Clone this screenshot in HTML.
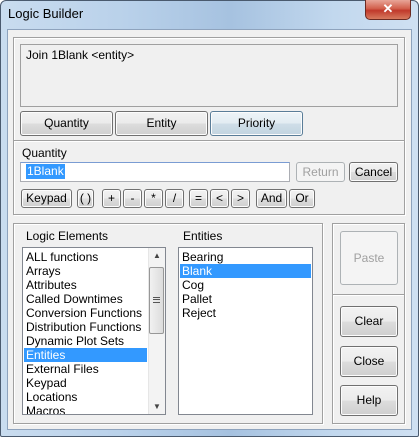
<!DOCTYPE html>
<html><head><style>
*{box-sizing:border-box;margin:0;padding:0}
body{width:419px;height:437px;overflow:hidden;background:#fff;font-family:"Liberation Sans",sans-serif;font-size:12px;color:#000;position:relative}
.a{position:absolute}
.frame{left:0;top:0;width:419px;height:437px;border:1px solid #4a5a6e;border-radius:6px 6px 2px 2px;background:linear-gradient(90deg,#c9dcef 0%,#b9d1ea 30%,#a6c2e0 55%,#c2d8ee 80%,#cfe0f2 100%)}
.client{left:7px;top:29px;width:405px;height:401px;background:#f0f0f0;border:1px solid #8ea3bd}
.grp{border:1px solid #a0a0a0;box-shadow:inset 1px 1px 0 #fff,1px 1px 0 #fff}
.btn{border:1px solid #707070;border-radius:3px;background:linear-gradient(#f2f2f2 0%,#ebebeb 50%,#dddddd 51%,#cfcfcf 100%);text-align:center;box-shadow:inset 0 0 0 1px #fcfcfc}
.dis{border:1px solid #adb2b5;background:#f4f4f4;color:#a0a0a0;border-radius:3px;text-align:center}
.list{background:#fff;border:1px solid #828790}
.it{position:absolute;left:2px;height:14px;line-height:14px;white-space:nowrap}
.sel{background:#3399ff;color:#fff}
</style></head><body>
<div class="a frame"></div>
<div class="a" style="left:8px;top:6px;font-size:13px">Logic Builder</div>
<div class="a" style="left:365px;top:0;width:46px;height:20px;border:1px solid #6b2a22;border-top:none;border-radius:0 0 5px 5px;background:linear-gradient(#e8a598 0%,#d2604c 45%,#c0392b 55%,#d77a5e 100%);color:#fff;font-weight:bold;text-align:center;line-height:18px;font-size:13px">✕</div>
<div class="a client"></div>
<div class="a grp" style="left:13px;top:37px;width:392px;height:178px"></div>
<div class="a" style="left:20px;top:44px;width:378px;height:63px;border:1px solid #a0a0a0;background:#f0f0f0"></div>
<div class="a" style="left:26px;top:48px">Join 1Blank &lt;entity&gt;</div>
<div class="a btn" style="left:20px;top:111px;width:93px;height:25px;line-height:23px">Quantity</div>
<div class="a btn" style="left:115px;top:111px;width:93px;height:25px;line-height:23px">Entity</div>
<div class="a btn" style="left:210px;top:111px;width:93px;height:25px;line-height:23px;border-color:#5a7d98;background:linear-gradient(#eef4f8 0%,#e2ecf2 50%,#cfdee8 51%,#c2d4e0 100%)">Priority</div>
<div class="a" style="left:14px;top:140px;width:390px;height:2px;border-top:1px solid #a0a0a0;border-bottom:1px solid #fff"></div>
<div class="a" style="left:22px;top:146px">Quantity</div>
<div class="a" style="left:20px;top:162px;width:270px;height:20px;background:#fff;border:1px solid #abadb3;border-top-color:#7a9cd3"></div>
<div class="a" style="left:26px;top:164px;background:#3399ff;color:#fff;height:15px;line-height:15px;padding:0 1px">1Blank</div>
<div class="a dis" style="left:296px;top:162px;width:49px;height:20px;line-height:18px">Return</div>
<div class="a btn" style="left:349px;top:162px;width:49px;height:20px;line-height:18px">Cancel</div>
<div class="a btn" style="left:21px;top:189px;width:51px;height:19px;line-height:17px">Keypad</div>
<div class="a btn" style="left:77px;top:189px;width:17px;height:19px;line-height:17px">( )</div>
<div class="a btn" style="left:102px;top:189px;width:19px;height:19px;line-height:17px">+</div>
<div class="a btn" style="left:123px;top:189px;width:19px;height:19px;line-height:17px">-</div>
<div class="a btn" style="left:144px;top:189px;width:19px;height:19px;line-height:17px">*</div>
<div class="a btn" style="left:165px;top:189px;width:19px;height:19px;line-height:17px">/</div>
<div class="a btn" style="left:189px;top:189px;width:19px;height:19px;line-height:17px">=</div>
<div class="a btn" style="left:210px;top:189px;width:19px;height:19px;line-height:17px">&lt;</div>
<div class="a btn" style="left:231px;top:189px;width:19px;height:19px;line-height:17px">&gt;</div>
<div class="a btn" style="left:256px;top:189px;width:31px;height:19px;line-height:17px">And</div>
<div class="a btn" style="left:289px;top:189px;width:26px;height:19px;line-height:17px">Or</div>

<div class="a grp" style="left:13px;top:223px;width:310px;height:201px"></div>
<div class="a grp" style="left:332px;top:223px;width:73px;height:201px"></div>
<div class="a" style="left:26px;top:229px">Logic Elements</div>
<div class="a" style="left:183px;top:229px">Entities</div>
<div class="a list" style="left:22px;top:247px;width:144px;height:168px;overflow:hidden">
<div class="it" style="top:2px;left:3px">ALL functions</div>
<div class="it" style="top:16px;left:3px">Arrays</div>
<div class="it" style="top:30px;left:3px">Attributes</div>
<div class="it" style="top:44px;left:3px">Called Downtimes</div>
<div class="it" style="top:58px;left:3px">Conversion Functions</div>
<div class="it" style="top:72px;left:3px">Distribution Functions</div>
<div class="it" style="top:86px;left:3px">Dynamic Plot Sets</div>
<div class="it sel" style="top:100px;left:1px;width:123px;padding-left:2px">Entities</div>
<div class="it" style="top:114px;left:3px">External Files</div>
<div class="it" style="top:128px;left:3px">Keypad</div>
<div class="it" style="top:142px;left:3px">Locations</div>
<div class="it" style="top:156px;left:3px">Macros</div>
<div class="a" style="left:125px;top:0;width:17px;height:166px;background:#f3f3f3;border-left:1px solid #e6e6e6"></div>
<div class="a" style="left:126px;top:19px;width:15px;height:67px;border:1px solid #979797;border-radius:2px;background:linear-gradient(90deg,#f1f1f1,#dcdcdc)"></div>
<div class="a" style="left:130px;top:49px;width:7px;height:6px;border-top:1px solid #555;border-bottom:1px solid #555"></div>
<div class="a" style="left:130px;top:51px;width:7px;height:1px;background:#555"></div>
<div class="a" style="left:130px;top:3px;font-size:8px;color:#444">▲</div>
<div class="a" style="left:130px;top:154px;font-size:8px;color:#444">▼</div>
</div>
<div class="a list" style="left:178px;top:247px;width:135px;height:168px">
<div class="it" style="top:2px;left:3px">Bearing</div>
<div class="it sel" style="top:16px;left:1px;width:131px;padding-left:2px">Blank</div>
<div class="it" style="top:30px;left:3px">Cog</div>
<div class="it" style="top:44px;left:3px">Pallet</div>
<div class="it" style="top:58px;left:3px">Reject</div>
</div>
<div class="a dis" style="left:340px;top:231px;width:58px;height:54px;line-height:52px">Paste</div>
<div class="a" style="left:333px;top:294px;width:71px;height:2px;border-top:1px solid #a0a0a0;border-bottom:1px solid #fff"></div>
<div class="a btn" style="left:340px;top:306px;width:58px;height:31px;line-height:29px">Clear</div>
<div class="a btn" style="left:340px;top:346px;width:58px;height:31px;line-height:29px">Close</div>
<div class="a btn" style="left:340px;top:385px;width:58px;height:31px;line-height:29px">Help</div>
</body></html>
